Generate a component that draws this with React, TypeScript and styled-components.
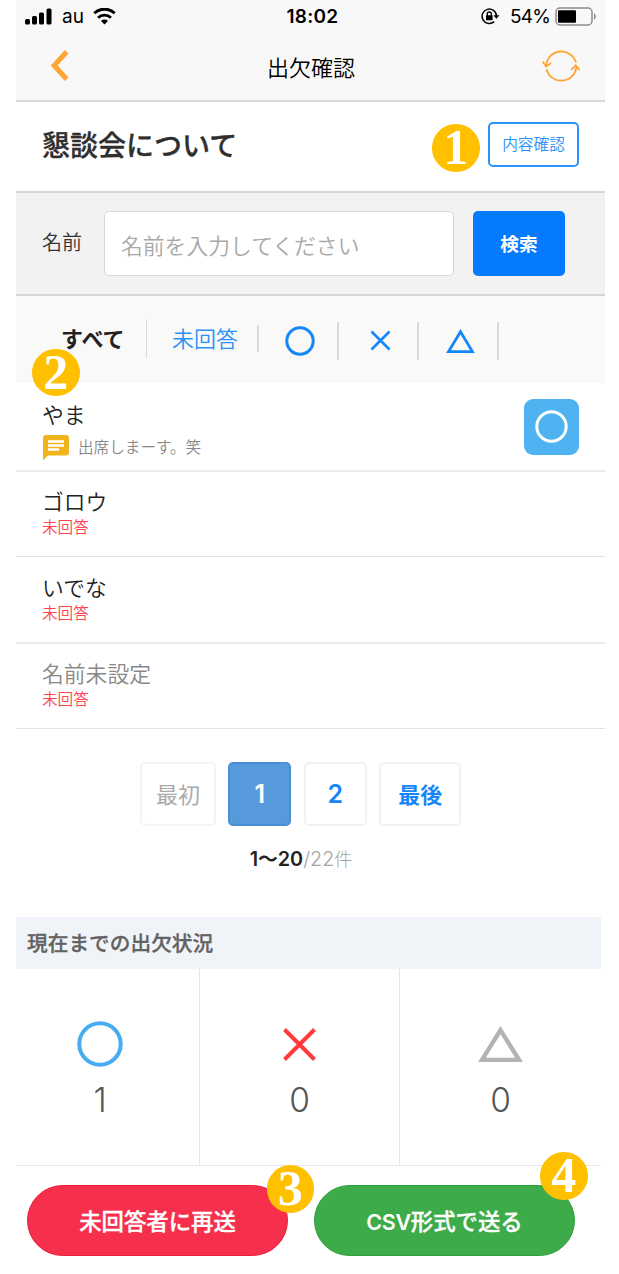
import React from "react";
import styled, { createGlobalStyle } from "styled-components";

const GlobalStyle = createGlobalStyle`
  * { box-sizing: border-box; }
  body { margin: 0; background: #fff; }
  button, input { font-family: inherit; margin: 0; padding: 0; border: 0; background: none; }
`;

const Screen = styled.main`
  position: relative;
  width: 619px;
  height: 1274px;
  padding-left: 16px;
  overflow: hidden;
  background: #fff;
  font-family: "Noto Sans CJK JP", sans-serif;
  color: #333;
`;

const Header = styled.header`
  width: 589px;
  height: 102px;
  background: #f8f8f8;
  border-bottom: 2px solid #d9d9d9;
`;

const StatusBar = styled.div`
  display: grid;
  grid-template-columns: 1fr auto 1fr;
  align-items: center;
  height: 32px;
  padding: 0 8px 0 9px;
  color: #000;
  font: 19px/32px Inter, sans-serif;
`;

const StatusGroup = styled.div<{ $end?: boolean }>`
  display: flex;
  align-items: center;
  justify-content: ${(p) => (p.$end ? "flex-end" : "flex-start")};
`;

const Carrier = styled.span`
  margin: 1px 9px 0 10px;
`;

const Clock = styled.span`
  padding: 1px 0 0 3px;
  font-weight: 600;
  font-size: 19px;
  letter-spacing: 0.25px;
`;

const Percent = styled.span`
  margin: 1px 5px 0 10px;
  letter-spacing: -0.8px;
`;

const NavBar = styled.div`
  display: grid;
  grid-template-columns: 70px 1fr 70px;
  height: 68px;
`;

const NavButton = styled.button<{ $end?: boolean }>`
  display: flex;
  align-items: flex-start;
  justify-content: ${(p) => (p.$end ? "flex-end" : "flex-start")};
  padding: ${(p) => (p.$end ? "16px 25px 0 0" : "18px 0 0 35px")};
`;

const NavTitle = styled.h1`
  margin: 0;
  padding-left: 1px;
  text-align: center;
  font-size: 22px;
  font-weight: 350;
  line-height: 68px;
  color: #000;
`;

const TitleBar = styled.section`
  display: flex;
  justify-content: space-between;
  width: 589px;
  height: 91px;
  padding: 20px 26px 0;
  border-bottom: 2px solid #d6d6d6;
`;

const Title = styled.h2`
  margin: 0;
  font-size: 28px;
  font-weight: 500;
  line-height: 44px;
  color: #2f2f2f;
  -webkit-text-stroke: 0.3px #2f2f2f;
`;

const OutlineButton = styled.button`
  width: 91px;
  height: 45px;
  padding-bottom: 3px !important;
  border: 2px solid #2a92fa !important;
  border-radius: 5px;
  color: #2a92fa;
  font-size: 15.7px;
  font-weight: 350;
`;

const SearchBar = styled.form`
  display: flex;
  width: 589px;
  height: 103px;
  padding: 18px 0 0 26px;
  background: #f2f2f2;
  border-bottom: 2px solid #d6d6d6;
`;

const SearchLabel = styled.label`
  width: 62px;
  font-size: 20px;
  font-weight: 350;
  line-height: 61px;
`;

const SearchInput = styled.input`
  width: 350px;
  height: 65px;
  padding: 2px 0 0 16px !important;
  border: 1px solid #d8d8d8 !important;
  border-radius: 5px;
  background: #fff !important;
  font-size: 21.8px;
  font-weight: 350;
  &::placeholder { color: #a8a8a8; opacity: 1; }
`;

const SearchButton = styled.button`
  width: 92px;
  height: 65px;
  margin-left: 19px !important;
  padding-bottom: 2px !important;
  background: #047aff !important;
  border-radius: 5px;
  color: #fff;
  font-size: 18.7px;
  font-weight: 700;
`;

const Tabs = styled.nav`
  display: flex;
  width: 589px;
  height: 87px;
  padding: 23px 0 0 45px;
  background: #f9f9f8;
`;

const Tab = styled.button<{ $width: number; $active?: boolean; $rule?: number; $ruleTop?: number; $ruleWidth?: number }>`
  display: flex;
  align-items: flex-start;
  width: ${(p) => p.$width}px;
  height: 42px;
  background-image: linear-gradient(#d9d9d9, #d9d9d9);
  background-repeat: no-repeat;
  background-size: ${(p) => p.$ruleWidth ?? 2}px ${(p) => p.$rule ?? 38}px;
  background-position: right 0 top ${(p) => p.$ruleTop ?? 3}px;
  color: ${(p) => (p.$active ? "#222" : "#2a92fa")};
  font-size: 22px;
  font-weight: ${(p) => (p.$active ? 700 : 350)};
  line-height: 37px;
`;

const TabInner = styled.span<{ $left: number; $top?: number }>`
  display: flex;
  padding: ${(p) => p.$top ?? 0}px 0 0 ${(p) => p.$left}px;
`;

const Row = styled.article<{ $height: number; $top?: number; $line?: number }>`
  display: flex;
  justify-content: space-between;
  width: 589px;
  height: ${(p) => p.$height}px;
  padding: ${(p) => p.$top ?? 13}px 26px 0;
  border-bottom: ${(p) => p.$line ?? 1}px solid ${(p) => (p.$line ? "#ececec" : "#e2e2e2")};
`;

const Name = styled.div<{ $muted?: boolean }>`
  font-size: 21.8px;
  font-weight: 350;
  line-height: 32px;
  color: ${(p) => (p.$muted ? "#888" : "#222")};
`;

const Unanswered = styled.div`
  margin-top: 1px;
  font-size: 15.6px;
  font-weight: 350;
  line-height: 16px;
  color: #ff4450;
`;

const Comment = styled.div`
  display: flex;
  gap: 9px;
  height: 28px;
  padding-left: 1px;
  font-size: 15.6px;
  font-weight: 350;
  line-height: 32px;
  color: #888;
`;

const CommentIcon = styled.span`
  display: flex;
  padding-top: 5px;
  line-height: 0;
`;

const Answer = styled.div`
  width: 55px;
  height: 56px;
  margin-top: 1px;
  padding: 11px 0 0 11px;
  border-radius: 9px;
  background: #50b3f1;
  line-height: 0;
`;

const Pager = styled.nav`
  display: flex;
  gap: 12.4px;
  padding: 33px 0 0 124px;
`;

const PageButton = styled.button<{ $width: number; $kind?: "current" | "disabled" }>`
  width: ${(p) => p.$width}px;
  height: 64px;
  padding-bottom: 2px !important;
  border: 2px solid ${(p) => (p.$kind === "current" ? "#4a8fd4" : p.$kind === "disabled" ? "#f4f4f4" : "#edf2f5")} !important;
  border-radius: 5px;
  background: ${(p) => (p.$kind === "current" ? "#569adb" : "#fff")} !important;
  color: ${(p) => (p.$kind === "current" ? "#fff" : p.$kind === "disabled" ? "#aaa" : "#1687fa")};
  font-size: 22px;
  font-weight: ${(p) => (p.$kind === "disabled" ? 400 : 700)};
`;

const PageDigit = styled.span`
  font-family: Inter, sans-serif;
  font-size: 25px;
  font-weight: 600;
`;

const Range = styled.p`
  margin: 19px 0 0;
  width: 570px;
  text-align: center;
  font-family: Inter, "Noto Sans CJK JP", sans-serif;
  font-size: 19.8px;
  line-height: 28px;
  font-weight: 300;
  color: #a4a4a4;
`;

const RangeCurrent = styled.span`
  font-weight: 600;
  color: #222;
`;

const RangeUnit = styled.span`
  font-size: 18px;
`;

const Summary = styled.section`
  width: 585px;
  margin-top: 43px;
`;

const SummaryTitle = styled.h3`
  height: 52px;
  margin: 0;
  padding-left: 11px;
  background: #f0f4f8;
  color: #636363;
  font-size: 20.7px;
  font-weight: 500;
  line-height: 50px;
  -webkit-text-stroke: 0.3px #636363;
`;

const Counts = styled.div`
  display: grid;
  grid-template-columns: 184px 200px 1fr;
  height: 197px;
  border-bottom: 1px solid #e6e6e6;
`;

const Count = styled.div<{ $shift?: number }>`
  display: flex;
  flex-direction: column;
  align-items: center;
  padding: 52px ${(p) => p.$shift ?? 0}px 0 0;
  border-right: 1px solid #e6e6e6;
  &:last-child { border-right: 0; }
`;

const CountMark = styled.div`
  display: flex;
  align-items: center;
  height: 46px;
`;

const CountValue = styled.span`
  margin-top: 13px;
  font-family: Inter, sans-serif;
  font-size: 33.5px;
  font-weight: 300;
  line-height: 40px;
  color: #555;
`;

const Actions = styled.footer`
  display: flex;
  gap: 26px;
  padding: 19px 0 0 11px;
`;

const ActionButton = styled.button<{ $color: string; $edge: string }>`
  width: 261px;
  height: 71px;
  padding-bottom: 2px !important;
  border: 1px solid ${(p) => p.$edge} !important;
  border-radius: 36px;
  background: ${(p) => p.$color} !important;
  color: #fff;
  font-size: 22.4px;
  font-weight: 500;
  -webkit-text-stroke: 0.3px #fff;
`;

const Latin = styled.span`
  font-family: Inter, sans-serif;
  font-size: 21.5px;
  font-weight: 600;
  letter-spacing: -0.3px;
  -webkit-text-stroke: 0;
`;

const StepBadge = styled.span<{ $x: number; $y: number }>`
  position: absolute;
  left: ${(p) => p.$x}px;
  top: ${(p) => p.$y}px;
  width: 47.5px;
  height: 47.5px;
  border-radius: 50%;
  background: #ffc000;
  color: #fff;
  text-align: center;
  font: 700 50px/47px "Liberation Serif", serif;
`;

const Signal = () => (
  <svg width="27" height="17" viewBox="0 0 27 17">
    <rect x="0" y="11" width="5" height="5.5" rx="1.5" />
    <rect x="7" y="8" width="5" height="8.5" rx="1.5" />
    <rect x="14" y="4.5" width="5" height="12" rx="1.5" />
    <rect x="21.5" y="0.5" width="5" height="16" rx="1.5" />
  </svg>
);

const Wifi = () => (
  <svg width="23" height="17" viewBox="0 0 23 17" fill="none" stroke="#000">
    <path d="M1.3 5.3a14.6 14.6 0 0 1 20.4 0" strokeWidth="3" />
    <path d="M5.1 9.7a9 9 0 0 1 12.8 0" strokeWidth="2.8" />
    <path d="M8 13a5 5 0 0 1 7 0l-3.5 3.5z" fill="#000" stroke="none" />
  </svg>
);

const RotationLock = () => (
  <svg width="19" height="17" viewBox="0 0 19 17" fill="none" stroke="#000" strokeWidth="1.5">
    <path d="M13.2 13.6a7.2 7.2 0 1 1 2.3-5.6" />
    <path d="M12.4 7.3h6l-3 3.5z" fill="#000" stroke="none" />
    <rect x="5" y="7.3" width="6.6" height="5" rx=".6" fill="#000" stroke="none" />
    <path d="M6.3 8V6a2 2 0 0 1 4 0v2" strokeWidth="1.3" />
  </svg>
);

const Battery = () => (
  <svg width="42" height="19" viewBox="0 0 42 19">
    <rect x="1" y="1" width="36" height="17" rx="4" fill="none" stroke="#8c8c8c" strokeWidth="1.5" />
    <rect x="3" y="3.3" width="18" height="12.4" rx="1" />
    <path d="M39 6.3c2.4 1 2.4 5.4 0 6.4z" fill="#8c8c8c" />
  </svg>
);

const Back = () => (
  <svg width="18" height="31" viewBox="0 0 18 31" fill="none" stroke="#ffa534" strokeWidth="5">
    <path d="M15.7 1.7 3.2 15.5l12.5 13.8" />
  </svg>
);

const Refresh = () => (
  <svg width="38" height="36" viewBox="0 0 38 36" fill="none" stroke="#ffa534" strokeWidth="1.8">
    <path d="M4.2 17.4A15.2 15.2 0 0 1 34 14.6M34.4 18.6A15.2 15.2 0 0 1 4.5 21.2" />
    <path d="m.7 13.6 3.5 5 4.9-3.6M29.2 21.8l4.6-4.4 3.8 4.9" />
  </svg>
);

const Circle = ({ size, color, stroke }: { size: number; color: string; stroke: number }) => (
  <svg width={size} height={size}>
    <circle cx={size / 2} cy={size / 2} r={(size - stroke) / 2 - 0.3} fill="none" stroke={color} strokeWidth={stroke} />
  </svg>
);

const Cross = ({ size, color, stroke }: { size: number; color: string; stroke: number }) => (
  <svg width={size} height={size} viewBox={`0 0 ${size} ${size}`}>
    <path d={`M1.5 1.5 ${size - 1.5} ${size - 1.5}M${size - 1.5} 1.5 1.5 ${size - 1.5}`} stroke={color} strokeWidth={stroke} />
  </svg>
);

const Triangle = ({ width, height, color, stroke }: { width: number; height: number; color: string; stroke: number }) => (
  <svg width={width} height={height}>
    <path
      d={`M${width / 2} ${stroke * 0.95}L${width - stroke * 0.92} ${height - stroke / 2}H${stroke * 0.92}Z`}
      fill="none"
      stroke={color}
      strokeWidth={stroke}
    />
  </svg>
);

const Bubble = () => (
  <svg width="26" height="26" viewBox="0 0 26 26">
    <path d="M3 0h20a3 3 0 0 1 3 3v14.5a3 3 0 0 1-3 3H5L0 25.5V3a3 3 0 0 1 3-3z" fill="#f0b41c" />
    <path d="M5 6.5h16M5 10.5h16M5 14.5h11" stroke="#fff" strokeWidth="2.4" />
  </svg>
);

const pending = [
  { name: "ゴロウ", height: 85 },
  { name: "いでな", height: 87, line: 2, top: 14 },
  { name: "名前未設定", height: 85, muted: true },
];

export default function App() {
  return (
    <>
      <GlobalStyle />
      <Screen>
        <Header>
          <StatusBar>
            <StatusGroup>
              <Signal />
              <Carrier>au</Carrier>
              <Wifi />
            </StatusGroup>
            <Clock>18:02</Clock>
            <StatusGroup $end>
              <RotationLock />
              <Percent>54%</Percent>
              <Battery />
            </StatusGroup>
          </StatusBar>
          <NavBar>
            <NavButton aria-label="戻る"><Back /></NavButton>
            <NavTitle>出欠確認</NavTitle>
            <NavButton $end aria-label="更新"><Refresh /></NavButton>
          </NavBar>
        </Header>

        <TitleBar>
          <Title>懇談会について</Title>
          <OutlineButton>内容確認</OutlineButton>
        </TitleBar>

        <SearchBar onSubmit={(e) => e.preventDefault()}>
          <SearchLabel htmlFor="name">名前</SearchLabel>
          <SearchInput id="name" placeholder="名前を入力してください" />
          <SearchButton>検索</SearchButton>
        </SearchBar>

        <Tabs>
          <Tab $width={86} $active $rule={39} $ruleTop={0} $ruleWidth={1}><TabInner $left={0}>すべて</TabInner></Tab>
          <Tab $width={112} $rule={27} $ruleTop={6}><TabInner $left={25}>未回答</TabInner></Tab>
          <Tab $width={80}><TabInner $left={26} $top={7}><Circle size={30} color="#1687fa" stroke={3} /></TabInner></Tab>
          <Tab $width={80}><TabInner $left={31} $top={11}><Cross size={21} color="#1687fa" stroke={2.6} /></TabInner></Tab>
          <Tab $width={80}><TabInner $left={27} $top={10}><Triangle width={29} height={24} color="#1687fa" stroke={2.8} /></TabInner></Tab>
        </Tabs>

        <Row $height={89} $top={15} $line={2}>
          <div>
            <Name>やま</Name>
            <Comment>
              <CommentIcon><Bubble /></CommentIcon>
              <span>出席しまーす。笑</span>
            </Comment>
          </div>
          <Answer><Circle size={33} color="#fff" stroke={3} /></Answer>
        </Row>
        {pending.map((row) => (
          <Row key={row.name} $height={row.height} $top={row.top} $line={row.line}>
            <div>
              <Name $muted={row.muted}>{row.name}</Name>
              <Unanswered>未回答</Unanswered>
            </div>
          </Row>
        ))}

        <Pager>
          <PageButton $width={76} $kind="disabled">最初</PageButton>
          <PageButton $width={63} $kind="current"><PageDigit>1</PageDigit></PageButton>
          <PageButton $width={63}><PageDigit>2</PageDigit></PageButton>
          <PageButton $width={82}>最後</PageButton>
        </Pager>
        <Range><RangeCurrent>1〜20</RangeCurrent>/22<RangeUnit>件</RangeUnit></Range>

        <Summary>
          <SummaryTitle>現在までの出欠状況</SummaryTitle>
          <Counts>
            <Count $shift={15}>
              <CountMark><Circle size={46} color="#46adf0" stroke={4} /></CountMark>
              <CountValue>1</CountValue>
            </Count>
            <Count>
              <CountMark><Cross size={33} color="#ff3b3b" stroke={4} /></CountMark>
              <CountValue>0</CountValue>
            </Count>
            <Count>
              <CountMark><Triangle width={45} height={36} color="#b3b3b3" stroke={4.3} /></CountMark>
              <CountValue>0</CountValue>
            </Count>
          </Counts>
        </Summary>

        <Actions>
          <ActionButton $color="#f6304c" $edge="#ee1c3b">未回答者に再送</ActionButton>
          <ActionButton $color="#3dab49" $edge="#2ba038"><Latin>CSV</Latin>形式で送る</ActionButton>
        </Actions>

        <StepBadge $x={432} $y={124}>1</StepBadge>
        <StepBadge $x={32} $y={348.5}>2</StepBadge>
        <StepBadge $x={266.5} $y={1165}>3</StepBadge>
        <StepBadge $x={540} $y={1152}>4</StepBadge>
      </Screen>
    </>
  );
}
